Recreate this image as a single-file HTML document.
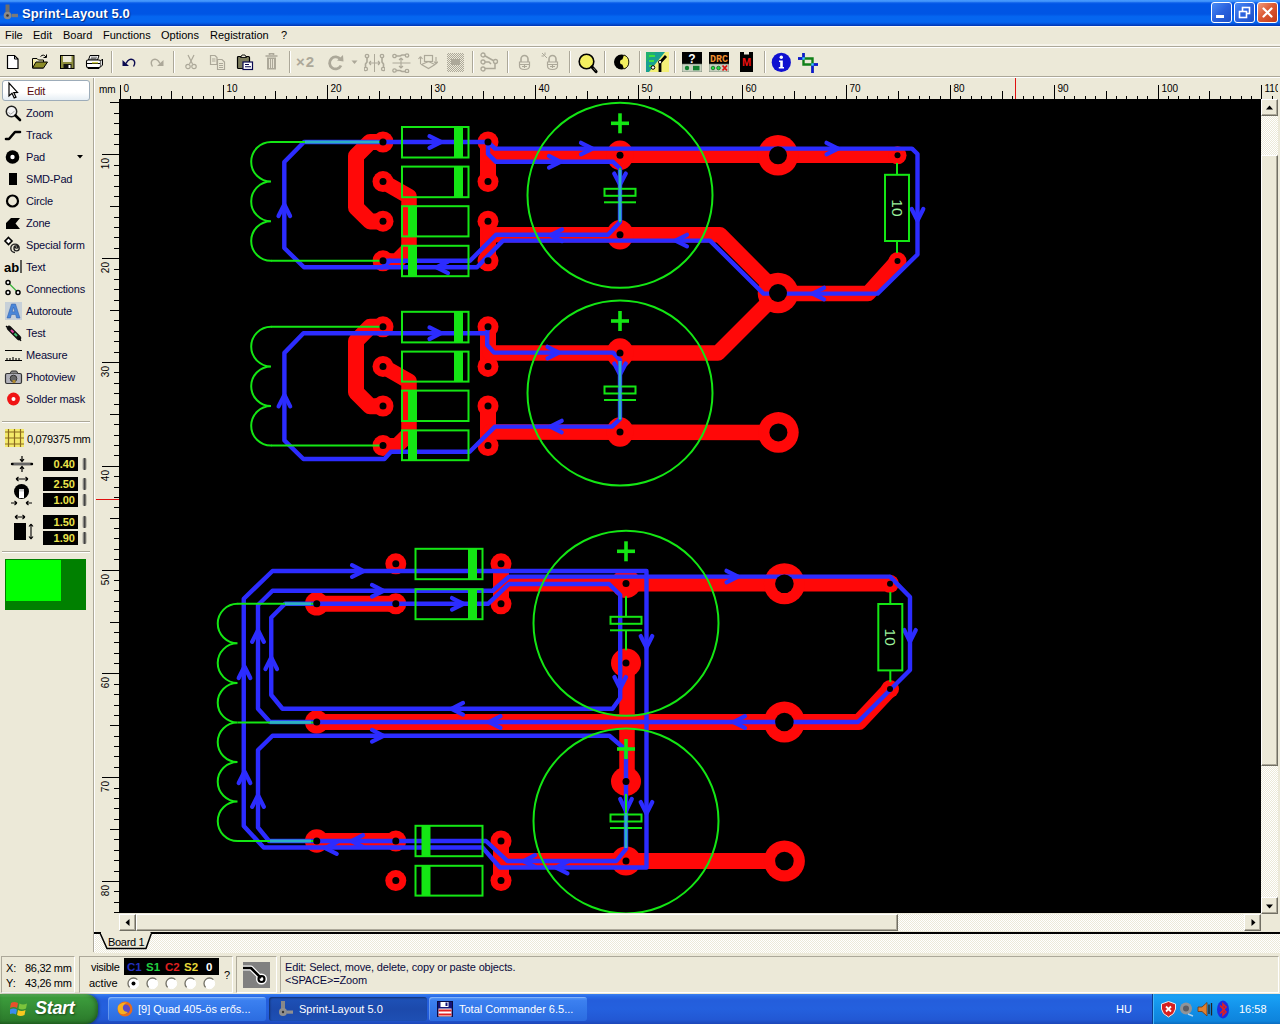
<!DOCTYPE html><html><head><meta charset="utf-8"><title>Sprint-Layout 5.0</title><style>
*{box-sizing:border-box;margin:0;padding:0}
html,body{width:1280px;height:1024px;overflow:hidden;background:#ece9d8;font-family:"Liberation Sans",sans-serif;font-size:11px;color:#000}
.abs{position:absolute}
#title{position:absolute;left:0;top:0;width:1280px;height:26px;background:linear-gradient(to bottom,#4a9cff 0%,#3a8cf8 6%,#0c5eea 11%,#0055e6 16%,#0055e4 54%,#0566f0 64%,#0566f0 85%,#0456de 91%,#0034b0 100%)}
#title .t{position:absolute;left:22px;top:6px;color:#fff;font-weight:bold;font-size:13px;text-shadow:1px 1px 1px #0a2a80;letter-spacing:0.1px;white-space:nowrap}
#menu{position:absolute;left:0;top:26px;width:1280px;height:20px;background:#ece9d8}
#menu span{position:absolute;top:3px;white-space:nowrap}
.t11{font-size:11px;white-space:nowrap;position:absolute}
svg{display:block}
</style></head><body>
<div id="title"><svg class="abs" style="left:3px;top:4px" width="18" height="18" viewBox="0 0 18 18" ><rect x="2.500" y="0.500" width="4" height="8" fill="#6e6e6e"/><circle cx="4.500" cy="11.500" r="3.800" fill="#8a8a8a"/><circle cx="4.500" cy="11.500" r="1.300" fill="#333"/><rect x="8.500" y="9.800" width="6.500" height="3.400" fill="#7a7a7a"/></svg><div class="t">Sprint-Layout 5.0</div><div class="abs" style="left:1211px;top:2px;width:21px;height:21px;border:1px solid #fff;border-radius:3px;background:linear-gradient(135deg,#4a8cf6 0%,#2a62de 50%,#1c4fc8 100%)"><div class="abs" style="left:4px;top:12px;width:8px;height:3px;background:#fff"></div></div><div class="abs" style="left:1234px;top:2px;width:21px;height:21px;border:1px solid #fff;border-radius:3px;background:linear-gradient(135deg,#4a8cf6 0%,#2a62de 50%,#1c4fc8 100%)"><svg class="abs" style="left:3px;top:3px" width="14" height="14" viewBox="0 0 14 14" ><rect x="4.5" y="1.5" width="7" height="6" fill="none" stroke="#fff" stroke-width="1.6"/><rect x="1.5" y="5.5" width="7" height="6" fill="#2a62de" stroke="#fff" stroke-width="1.6"/></svg></div><div class="abs" style="left:1257px;top:2px;width:21px;height:21px;border:1px solid #fff;border-radius:3px;background:linear-gradient(135deg,#f09a7c 0%,#dc5a34 45%,#c23a18 100%)"><svg class="abs" style="left:3px;top:3px" width="14" height="14" viewBox="0 0 14 14" ><path d="M2.5 2.5 L10.5 10.5 M10.5 2.5 L2.5 10.5" stroke="#fff" stroke-width="2.2" stroke-linecap="round"/></svg></div></div>
<div id="menu"><span style="left:5px">File</span><span style="left:33px">Edit</span><span style="left:63px">Board</span><span style="left:103px">Functions</span><span style="left:161px">Options</span><span style="left:210px">Registration</span><span style="left:281px">?</span></div><div class="abs" style="left:0px;top:26px;width:1280px;height:1px;background:#fbfaf6"></div><div class="abs" style="left:0px;top:44px;width:1280px;height:2px;background:#f5f3ea"></div><div class="abs" style="left:0px;top:46px;width:1280px;height:1px;background:#aca899"></div><div class="abs" style="left:0px;top:47px;width:1280px;height:1px;background:#fff"></div>
<div class="abs" style="left:0px;top:76px;width:1280px;height:1px;background:#aca899"></div><div class="abs" style="left:0px;top:77px;width:1280px;height:1px;background:#fff"></div><div class="abs" style="left:111px;top:51px;width:1px;height:22px;background:#aca899"></div><div class="abs" style="left:112px;top:51px;width:1px;height:22px;background:#fff"></div><div class="abs" style="left:173px;top:51px;width:1px;height:22px;background:#aca899"></div><div class="abs" style="left:174px;top:51px;width:1px;height:22px;background:#fff"></div><div class="abs" style="left:289px;top:51px;width:1px;height:22px;background:#aca899"></div><div class="abs" style="left:290px;top:51px;width:1px;height:22px;background:#fff"></div><div class="abs" style="left:472px;top:51px;width:1px;height:22px;background:#aca899"></div><div class="abs" style="left:473px;top:51px;width:1px;height:22px;background:#fff"></div><div class="abs" style="left:507px;top:51px;width:1px;height:22px;background:#aca899"></div><div class="abs" style="left:508px;top:51px;width:1px;height:22px;background:#fff"></div><div class="abs" style="left:569px;top:51px;width:1px;height:22px;background:#aca899"></div><div class="abs" style="left:570px;top:51px;width:1px;height:22px;background:#fff"></div><div class="abs" style="left:604px;top:51px;width:1px;height:22px;background:#aca899"></div><div class="abs" style="left:605px;top:51px;width:1px;height:22px;background:#fff"></div><div class="abs" style="left:639px;top:51px;width:1px;height:22px;background:#aca899"></div><div class="abs" style="left:640px;top:51px;width:1px;height:22px;background:#fff"></div><div class="abs" style="left:674px;top:51px;width:1px;height:22px;background:#aca899"></div><div class="abs" style="left:675px;top:51px;width:1px;height:22px;background:#fff"></div><div class="abs" style="left:764px;top:51px;width:1px;height:22px;background:#aca899"></div><div class="abs" style="left:765px;top:51px;width:1px;height:22px;background:#fff"></div><svg class="abs" style="left:6px;top:54px" width="14" height="16" viewBox="0 0 14 16" ><path d="M1.5 1.5H8.5L12 5V14.5H1.5Z" fill="#fff" stroke="#000" stroke-width="1.2"/><path d="M8.5 1.5V5H12" fill="none" stroke="#000" stroke-width="1"/></svg><svg class="abs" style="left:31px;top:53px" width="18" height="17" viewBox="0 0 18 17" ><path d="M1.5 5.5H6L7.5 7H12.5V9" fill="#f4ec9c" stroke="#000" stroke-width="1"/><path d="M1.5 5.5V15H12.5" fill="#f4ec9c" stroke="#000" stroke-width="1"/><path d="M1.5 15L5 9H16.5L12.5 15Z" fill="#8c8c28" stroke="#000" stroke-width="1"/><path d="M9.5 3.5Q12.5 0.5 15 4M15.5 1.5V4.5H12.5" fill="none" stroke="#000" stroke-width="1"/></svg><svg class="abs" style="left:60px;top:54px" width="15" height="16" viewBox="0 0 15 16" ><rect x="0.5" y="1.5" width="13.5" height="13" fill="#8c8c3c" stroke="#000" stroke-width="1"/><rect x="3" y="2" width="8.5" height="6" fill="#ece9d8"/><rect x="3.5" y="10" width="8" height="4.5" fill="#111"/><rect x="8.5" y="11" width="2" height="3" fill="#fff"/></svg><svg class="abs" style="left:85px;top:54px" width="19" height="16" viewBox="0 0 19 16" ><path d="M5 1.5H14L12.5 6H3.5Z" fill="#fff" stroke="#000" stroke-width="1"/><path d="M6 3.2H12M5.5 4.6H11.5" stroke="#444" stroke-width="0.8"/><rect x="1.5" y="6" width="14" height="7.5" rx="1.5" fill="#fff" stroke="#000" stroke-width="1.1"/><path d="M15.5 7L17.5 5V11L15.5 13" fill="#ddd" stroke="#000" stroke-width="1"/><path d="M2 9.5H15" stroke="#000" stroke-width="1"/><path d="M7 8.8H13" stroke="#c8c828" stroke-width="1.2"/><path d="M3 13.5V14.5H14V13.5" fill="none" stroke="#000"/></svg><svg class="abs" style="left:121px;top:56px" width="16" height="12" viewBox="0 0 16 12" ><path d="M5 7.5Q8 1.5 12.5 4Q15 6.5 12.5 10.5" fill="none" stroke="#0a0a50" stroke-width="1.4"/><path d="M1.5 4V10H8Z" fill="#0a0a50"/></svg><svg class="abs" style="left:149px;top:56px" width="16" height="12" viewBox="0 0 16 12" ><path d="M11 7.5Q8 1.5 3.5 4Q1 6.5 3.5 10.5" fill="none" stroke="#aca899" stroke-width="1.4"/><path d="M14.5 4V10H8Z" fill="#aca899"/></svg><svg class="abs" style="left:184px;top:54px" width="14" height="17" viewBox="0 0 14 17" ><path d="M4 1L8.5 10M10 1L5.5 10" stroke="#aca899" stroke-width="1.2" fill="none"/><circle cx="4" cy="12.5" r="2.2" fill="none" stroke="#aca899" stroke-width="1.2"/><circle cx="10" cy="12.5" r="2.2" fill="none" stroke="#aca899" stroke-width="1.2"/></svg><svg class="abs" style="left:209px;top:54px" width="18" height="17" viewBox="0 0 18 17" ><path d="M1.5 1.5H6L8 3.5V10.5H1.5Z" fill="#ece9d8" stroke="#aca899" stroke-width="1.2"/><path d="M3 5H6.5M3 7H6.5" stroke="#aca899"/><path d="M8.5 5.5H13L15.5 8V15.500H8.5Z" fill="#ece9d8" stroke="#aca899" stroke-width="1.2"/><path d="M10 9.5H14M10 11.5H14M10 13.5H14" stroke="#aca899"/></svg><svg class="abs" style="left:236px;top:54px" width="18" height="17" viewBox="0 0 18 17" ><rect x="1.5" y="2.5" width="12" height="12" rx="1" fill="#7c7c5c" stroke="#000" stroke-width="1.2"/><path d="M4.5 3.5L6 1H9L10.500 3.5Z" fill="#ece9d8" stroke="#000" stroke-width="0.9"/><rect x="7" y="8" width="9.5" height="7.5" fill="#fff" stroke="#0a0a50" stroke-width="1.2"/><path d="M9 10.5H13M9 12.800H15" stroke="#0a0a50" stroke-width="1.1"/></svg><svg class="abs" style="left:264px;top:53px" width="15" height="18" viewBox="0 0 15 18" ><path d="M5.5 2V0.800H9.5V2M1.5 3H13.5" stroke="#aca899" stroke-width="1.6" fill="none"/><path d="M3 4.500H12V16.500H3Z" fill="#aca899"/><path d="M5.500 6V15M7.500 6V15M9.500 6V15" stroke="#ece9d8" stroke-width="0.9"/></svg><div class="abs" style="left:296px;top:53px;font-size:15px;font-weight:bold;color:#aca899;letter-spacing:1px;line-height:18px">×2</div><svg class="abs" style="left:326px;top:54px" width="19" height="18" viewBox="0 0 19 18" ><path d="M14.500 5.500A6 6 0 1 0 15 11.500" fill="none" stroke="#aca899" stroke-width="2.800"/><path d="M11 6.500L17.500 7.500L17 1Z" fill="#aca899"/></svg><svg class="abs" style="left:351px;top:60px" width="7" height="5" viewBox="0 0 7 5" ><path d="M0.500 0.500H6.500L3.500 4Z" fill="#aca899"/></svg><svg class="abs" style="left:364px;top:53px" width="21" height="20" viewBox="0 0 21 20" ><path d="M10.500 1V19" stroke="#aca899" stroke-width="1"/><path d="M3 4V9L1.500 11V15M18 4V9L19.500 11V15" stroke="#aca899" stroke-width="1.600" fill="none"/><circle cx="3" cy="3" r="1.700" fill="#ece9d8" stroke="#aca899" stroke-width="1.300"/><circle cx="18" cy="3" r="1.700" fill="#ece9d8" stroke="#aca899" stroke-width="1.300"/><circle cx="1.800" cy="16" r="1.700" fill="#ece9d8" stroke="#aca899" stroke-width="1.300"/><circle cx="19.200" cy="16" r="1.700" fill="#ece9d8" stroke="#aca899" stroke-width="1.300"/><path d="M5 10H16M5 10l2-2M5 10l2 2M16 10l-2-2M16 10l-2 2" stroke="#aca899" stroke-width="1.100" fill="none"/></svg><svg class="abs" style="left:392px;top:53px" width="19" height="20" viewBox="0 0 19 20" ><path d="M0.500 10H18.500" stroke="#aca899" stroke-width="1"/><path d="M3 3H8L10 2H14M3 17.500H8L10 18.500H14" stroke="#aca899" stroke-width="1.600" fill="none"/><circle cx="2.500" cy="3" r="1.700" fill="#ece9d8" stroke="#aca899" stroke-width="1.300"/><circle cx="15" cy="2.500" r="1.700" fill="#ece9d8" stroke="#aca899" stroke-width="1.300"/><circle cx="2.500" cy="17.500" r="1.700" fill="#ece9d8" stroke="#aca899" stroke-width="1.300"/><circle cx="15" cy="18" r="1.700" fill="#ece9d8" stroke="#aca899" stroke-width="1.300"/><path d="M9 5V15M9 5l-2 2M9 5l2 2M9 15l-2-2M9 15l2-2" stroke="#aca899" stroke-width="1.100" fill="none"/></svg><svg class="abs" style="left:418px;top:54px" width="20" height="18" viewBox="0 0 20 18" ><rect x="6.500" y="1.500" width="8" height="6" fill="none" stroke="#aca899" stroke-width="1.200"/><path d="M3.500 10.500L10.500 7.500L17 10.500L10.500 14.500Z" fill="none" stroke="#aca899" stroke-width="1.100"/><path d="M2.500 10V2.500M2.500 2.500l-2 2.500M2.500 2.500l2 2.500M18 3V10M18 10l-2-2.500M18 10l2-2.500" stroke="#aca899" stroke-width="1.100" fill="none"/></svg><div class="abs" style="left:447px;top:53px;width:17px;height:19px;background-color:#ece9d8;background-image:linear-gradient(45deg,#aca899 25%,transparent 25%,transparent 75%,#aca899 75%),linear-gradient(45deg,#aca899 25%,transparent 25%,transparent 75%,#aca899 75%);background-size:2px 2px;background-position:0 0,1px 1px"></div><div class="abs" style="left:451px;top:59px;width:9px;height:6px;background:#aca899"></div><svg class="abs" style="left:480px;top:52px" width="20" height="21" viewBox="0 0 20 21" ><path d="M3.500 3L15 9.500V16.500H3.500M3.500 10H9L11 12" fill="none" stroke="#aca899" stroke-width="1.500"/><circle cx="3" cy="3" r="2" fill="#ece9d8" stroke="#aca899" stroke-width="1.300"/><circle cx="3" cy="10" r="2" fill="#ece9d8" stroke="#aca899" stroke-width="1.300"/><circle cx="3" cy="17" r="2" fill="#ece9d8" stroke="#aca899" stroke-width="1.300"/><circle cx="15.500" cy="9.500" r="2" fill="#ece9d8" stroke="#aca899" stroke-width="1.300"/></svg><svg class="abs" style="left:517px;top:54px" width="15" height="17" viewBox="0 0 15 17" ><path d="M4 8V5A3.500 3.500 0 0 1 11 5V8" fill="none" stroke="#aca899" stroke-width="1.600"/><path d="M2.500 8H12.500V12Q12.500 15.500 7.500 15.500Q2.500 15.500 2.500 12Z" fill="#ece9d8" stroke="#aca899" stroke-width="1.200"/><path d="M2.500 10.500H12.500M5 12.500H10M7.500 10.500V14" stroke="#aca899" stroke-width="1.100"/></svg><svg class="abs" style="left:545px;top:54px" width="15" height="17" viewBox="0 0 15 17" ><path d="M4 8V5A3.500 3.500 0 0 1 11 5V8" fill="none" stroke="#aca899" stroke-width="1.600"/><path d="M2.500 8H12.500V12Q12.500 15.500 7.500 15.500Q2.500 15.500 2.500 12Z" fill="#ece9d8" stroke="#aca899" stroke-width="1.200"/><path d="M2.500 10.500H12.500M5 12.500H10M7.500 10.500V14" stroke="#aca899" stroke-width="1.100"/></svg><svg class="abs" style="left:541px;top:52px" width="8" height="8" viewBox="0 0 8 8" ><path d="M1 1L6 6M4 0.500V3M0.500 4H3" stroke="#aca899" stroke-width="1"/></svg><svg class="abs" style="left:577px;top:52px" width="22" height="22" viewBox="0 0 22 22" ><circle cx="9.500" cy="9.500" r="7.300" fill="#f4f060" stroke="#000" stroke-width="1.600"/><path d="M15 15L19 19.500" stroke="#000" stroke-width="3.200" stroke-linecap="round"/><path d="M16.500 16.200L18.500 18.500" stroke="#999" stroke-width="0.800"/></svg><svg class="abs" style="left:613px;top:53px" width="18" height="18" viewBox="0 0 18 18" ><circle cx="8.500" cy="9" r="7.500" fill="#000"/><path d="M8.500 9L11 1.900A7.500 7.500 0 0 1 11 16.100Z" fill="#f4f060"/><circle cx="9.500" cy="9" r="2.500" fill="#f4f060"/><path d="M11 2A7.500 7.500 0 0 1 11 16" fill="none" stroke="#000" stroke-width="0.900"/></svg><svg class="abs" style="left:646px;top:52px" width="23" height="20" viewBox="0 0 23 20" ><rect width="23" height="20" fill="#f4f078"/><path d="M0 0H19L3 20H0Z" fill="#18a090"/><path d="M0 0H10L0 10Z" fill="#20b070"/><path d="M3 4H9M3 9H8M3 14H6" stroke="#40e040" stroke-width="2.200"/><circle cx="7" cy="15.500" r="1.800" fill="#fff" stroke="#000"/><path d="M14 20V10.500L20 4" stroke="#000" stroke-width="2.800" fill="none"/><circle cx="14" cy="10" r="1.600" fill="#fff" stroke="#000" stroke-width="0.800"/></svg><svg class="abs" style="left:682px;top:52px" width="20" height="20" viewBox="0 0 20 20" ><rect width="20" height="12" fill="#000"/><rect y="12" width="20" height="8" fill="#c8d0c0" stroke="#607060" stroke-width="0.600"/><text x="10" y="10.500" text-anchor="middle" font-family="'Liberation Sans',sans-serif" font-weight="bold" font-size="12" fill="#fff">?</text><circle cx="5" cy="16" r="2.200" fill="#108030"/><rect x="11" y="13.800" width="6.500" height="4.500" fill="#108030"/></svg><svg class="abs" style="left:709px;top:52px" width="20" height="20" viewBox="0 0 20 20" ><rect width="20" height="12" fill="#000"/><rect y="12" width="20" height="8" fill="#c8d0c0" stroke="#607060" stroke-width="0.600"/><text x="10" y="9.500" text-anchor="middle" font-family="'Liberation Mono',monospace" font-weight="bold" font-size="10" fill="#f09030" textLength="18" lengthAdjust="spacingAndGlyphs">DRC</text><circle cx="4" cy="16" r="1.800" fill="#20e040" stroke="#106020" stroke-width="0.800"/><circle cx="9.500" cy="16" r="1.800" fill="#20e040" stroke="#106020" stroke-width="0.800"/><path d="M13.500 13.500L18 18.500M18 13.500L13.500 18.500" stroke="#e01010" stroke-width="1.800"/></svg><svg class="abs" style="left:740px;top:52px" width="13" height="20" viewBox="0 0 13 20" ><path d="M0 0H4V2.500H9V0H13V20H0Z" fill="#000"/><text x="6.500" y="14" text-anchor="middle" font-family="'Liberation Sans',sans-serif" font-weight="bold" font-size="11" fill="#f01010">M</text></svg><svg class="abs" style="left:771px;top:52px" width="21" height="21" viewBox="0 0 21 21" ><circle cx="10.300" cy="10.400" r="9.600" fill="#1010d0"/><circle cx="10.300" cy="5.300" r="1.700" fill="#fff"/><path d="M8 8.500H11.800V15H13V16.500H7.800V15H9.200V10H8Z" fill="#fff"/></svg><svg class="abs" style="left:797px;top:52px" width="22" height="22" viewBox="0 0 22 22" ><path d="M6.500 1V12.500H21M1 6.500H15.500V21" fill="none" stroke="#108018" stroke-width="2.400"/><path d="M1 6.500H6.500M6.500 1V6.500M15.500 12.500V21M15.500 12.500H21" stroke="#1010e0" stroke-width="2.400" fill="none"/><rect x="5.300" y="5.300" width="2.400" height="2.400" fill="#40d0f0"/><rect x="14.300" y="11.300" width="2.400" height="2.400" fill="#40d0f0"/></svg>
<div class="abs" style="left:93px;top:78px;width:1px;height:874px;background:#aca899"></div><div class="abs" style="left:94px;top:78px;width:1px;height:874px;background:#fff"></div><div class="abs" style="left:2px;top:80px;width:88px;height:21px;background:linear-gradient(to bottom,#fff 0%,#fff 60%,#e6eef4 100%);border:1px solid #9dacb9;border-radius:3px"></div><div class="t11" style="left:27px;top:85px;color:#5a0a0a;letter-spacing:-0.2px">Edit</div><svg class="abs" style="left:3px;top:81px" width="20" height="20" viewBox="0 0 20 20" ><path d="M6 2 L6 15 L9 12.3 L11.2 17 L13 16.2 L10.8 11.6 L14.5 11.4 Z" fill="#fff" stroke="#000" stroke-width="1.2" stroke-linejoin="miter"/></svg><div class="t11" style="left:26px;top:107px;color:#0a0a3c;letter-spacing:-0.2px">Zoom</div><svg class="abs" style="left:3px;top:103px" width="20" height="20" viewBox="0 0 20 20" ><circle cx="8.5" cy="8.5" r="5.2" fill="#f4f4f4" stroke="#222" stroke-width="1.5"/><path d="M5.5 9.5l2 1.6 2.2-1.2 1.8-2" stroke="#aaa" fill="none"/><path d="M12.5 12.5L17 17" stroke="#000" stroke-width="2.6" stroke-linecap="round"/></svg><div class="t11" style="left:26px;top:129px;color:#0a0a3c;letter-spacing:-0.2px">Track</div><svg class="abs" style="left:3px;top:125px" width="20" height="20" viewBox="0 0 20 20" ><path d="M3 14H6L12 7H17" stroke="#000" stroke-width="2.6" fill="none" stroke-linecap="round" stroke-linejoin="round"/></svg><div class="t11" style="left:26px;top:151px;color:#0a0a3c;letter-spacing:-0.2px">Pad</div><svg class="abs" style="left:3px;top:147px" width="20" height="20" viewBox="0 0 20 20" ><circle cx="9.5" cy="10" r="6.8" fill="#000"/><circle cx="9.5" cy="10" r="2.2" fill="#fff"/></svg><div class="t11" style="left:26px;top:173px;color:#0a0a3c;letter-spacing:-0.2px">SMD-Pad</div><svg class="abs" style="left:3px;top:169px" width="20" height="20" viewBox="0 0 20 20" ><rect x="6" y="4" width="8" height="12" fill="#000"/></svg><div class="t11" style="left:26px;top:195px;color:#0a0a3c;letter-spacing:-0.2px">Circle</div><svg class="abs" style="left:3px;top:191px" width="20" height="20" viewBox="0 0 20 20" ><circle cx="9.5" cy="10" r="5.5" fill="none" stroke="#000" stroke-width="2.2"/></svg><div class="t11" style="left:26px;top:217px;color:#0a0a3c;letter-spacing:-0.2px">Zone</div><svg class="abs" style="left:3px;top:213px" width="20" height="20" viewBox="0 0 20 20" ><path d="M3 16V10L8 5H17L12.5 10.5L17 16Z" fill="#000"/></svg><div class="t11" style="left:26px;top:239px;color:#0a0a3c;letter-spacing:-0.2px">Special form</div><svg class="abs" style="left:3px;top:235px" width="20" height="20" viewBox="0 0 20 20" ><path d="M5.5 2.5L9 6L5.5 9.5L2 6Z" fill="#fff" stroke="#000" stroke-width="1.6"/><path d="M12 17.5a4.2 4.2 0 1 1 4.2-4.2a2.6 2.6 0 1 1-2.6-2.6a1.2 1.2 0 1 1-1.2 1.2" fill="none" stroke="#222" stroke-width="1.4"/></svg><div class="t11" style="left:26px;top:261px;color:#0a0a3c;letter-spacing:-0.2px">Text</div><svg class="abs" style="left:3px;top:257px" width="20" height="20" viewBox="0 0 20 20" ><text x="1" y="15" font-family="'Liberation Sans',sans-serif" font-weight="bold" font-size="13" fill="#000">ab</text><path d="M18 3V16" stroke="#000" stroke-width="1.2"/></svg><div class="t11" style="left:26px;top:283px;color:#0a0a3c;letter-spacing:-0.2px">Connections</div><svg class="abs" style="left:3px;top:279px" width="20" height="20" viewBox="0 0 20 20" ><path d="M5 3.5L15 13.5" stroke="#3cb43c" stroke-width="1.2"/><circle cx="5" cy="3.5" r="2" fill="#fff" stroke="#000" stroke-width="1.5"/><circle cx="5" cy="13.5" r="2" fill="#fff" stroke="#000" stroke-width="1.5"/><circle cx="15" cy="13.5" r="2" fill="#fff" stroke="#000" stroke-width="1.5"/></svg><div class="t11" style="left:26px;top:305px;color:#0a0a3c;letter-spacing:-0.2px">Autoroute</div><svg class="abs" style="left:3px;top:301px" width="20" height="20" viewBox="0 0 20 20" ><rect x="2" y="1" width="17" height="18" fill="#b8c4d8" opacity="0.7"/><path d="M4 17L8.5 3H12.5L17 17H13.6L12.6 13.5H8.4L7.4 17Z M9.2 10.8H11.8L10.5 6Z" fill="#4a86d8" fill-rule="evenodd" stroke="#2a5aa8" stroke-width="0.5"/></svg><div class="t11" style="left:26px;top:327px;color:#0a0a3c;letter-spacing:-0.2px">Test</div><svg class="abs" style="left:3px;top:323px" width="20" height="20" viewBox="0 0 20 20" ><path d="M3 3L6 6" stroke="#000" stroke-width="1.2"/><path d="M6 5L16 15" stroke="#111" stroke-width="4.6" stroke-linecap="round"/><path d="M8 7L10.5 9.5" stroke="#e040a0" stroke-width="2"/><path d="M11.5 10.5L14 13" stroke="#40c070" stroke-width="2"/><path d="M16 15L18 18" stroke="#000" stroke-width="1.2"/></svg><div class="t11" style="left:26px;top:349px;color:#0a0a3c;letter-spacing:-0.2px">Measure</div><svg class="abs" style="left:3px;top:345px" width="20" height="20" viewBox="0 0 20 20" ><path d="M2 5.5H19M2 15.5H19M4 15.5v-2.5M7 15.5v-2.5M10 15.5v-3.5M13 15.5v-2.5M16 15.5v-2.5" stroke="#000" stroke-width="1.1" fill="none"/></svg><div class="t11" style="left:26px;top:371px;color:#0a0a3c;letter-spacing:-0.2px">Photoview</div><svg class="abs" style="left:3px;top:367px" width="20" height="20" viewBox="0 0 20 20" ><rect x="2.5" y="6.5" width="16" height="10" rx="1.5" fill="#b0b0b8" stroke="#333" stroke-width="1.2"/><path d="M7 6.5L8.5 4H13.5L15 6.5" fill="#888" stroke="#333"/><circle cx="10.5" cy="11.5" r="3.3" fill="#666" stroke="#333"/><rect x="9.5" y="13" width="3" height="3" fill="#b08a30"/></svg><div class="t11" style="left:26px;top:393px;color:#0a0a3c;letter-spacing:-0.2px">Solder mask</div><svg class="abs" style="left:3px;top:389px" width="20" height="20" viewBox="0 0 20 20" ><circle cx="10.5" cy="10" r="6.4" fill="#f01414"/><circle cx="10.5" cy="10" r="2" fill="#fff"/></svg><svg class="abs" style="left:76px;top:154px" width="8" height="6" viewBox="0 0 8 6" ><path d="M1 1 L7 1 L4 4.5 Z" fill="#000"/></svg><div class="abs" style="left:2px;top:421px;width:88px;height:1px;background:#aca899"></div><div class="abs" style="left:2px;top:422px;width:88px;height:1px;background:#fff"></div><div class="abs" style="left:2px;top:551px;width:88px;height:1px;background:#aca899"></div><div class="abs" style="left:2px;top:552px;width:88px;height:1px;background:#fff"></div><svg class="abs" style="left:5px;top:429px" width="19" height="18" viewBox="0 0 19 18" ><rect x="0" y="0" width="19" height="18" fill="#f4ea6a"/><path d="M3.5 0V18M0 3.0H19" stroke="#8a6a20" stroke-width="1.2"/><path d="M9.5 0V18M0 9.0H19" stroke="#8a6a20" stroke-width="1.2"/><path d="M15.5 0V18M0 15.0H19" stroke="#8a6a20" stroke-width="1.2"/></svg><div class="t11" style="left:27px;top:433px;letter-spacing:-0.35px">0,079375 mm</div><div class="abs" style="left:43px;top:457px;width:35px;height:14px;background:#000;color:#ece44c;font-weight:bold;font-size:11px;text-align:right;padding-right:3px;line-height:14px">0.40</div><div class="abs" style="left:82px;top:458px;width:5px;height:12px;background:linear-gradient(to right,#ece9d8,#555 45%,#333 55%,#ece9d8);border-radius:2px"></div><div class="abs" style="left:43px;top:477px;width:35px;height:14px;background:#000;color:#ece44c;font-weight:bold;font-size:11px;text-align:right;padding-right:3px;line-height:14px">2.50</div><div class="abs" style="left:82px;top:478px;width:5px;height:12px;background:linear-gradient(to right,#ece9d8,#555 45%,#333 55%,#ece9d8);border-radius:2px"></div><div class="abs" style="left:43px;top:493px;width:35px;height:14px;background:#000;color:#ece44c;font-weight:bold;font-size:11px;text-align:right;padding-right:3px;line-height:14px">1.00</div><div class="abs" style="left:82px;top:494px;width:5px;height:12px;background:linear-gradient(to right,#ece9d8,#555 45%,#333 55%,#ece9d8);border-radius:2px"></div><div class="abs" style="left:43px;top:515px;width:35px;height:14px;background:#000;color:#ece44c;font-weight:bold;font-size:11px;text-align:right;padding-right:3px;line-height:14px">1.50</div><div class="abs" style="left:82px;top:516px;width:5px;height:12px;background:linear-gradient(to right,#ece9d8,#555 45%,#333 55%,#ece9d8);border-radius:2px"></div><div class="abs" style="left:43px;top:531px;width:35px;height:14px;background:#000;color:#ece44c;font-weight:bold;font-size:11px;text-align:right;padding-right:3px;line-height:14px">1.90</div><div class="abs" style="left:82px;top:532px;width:5px;height:12px;background:linear-gradient(to right,#ece9d8,#555 45%,#333 55%,#ece9d8);border-radius:2px"></div><svg class="abs" style="left:10px;top:455px" width="24" height="18" viewBox="0 0 24 18" ><path d="M2 9H22" stroke="#000" stroke-width="2.4" stroke-linecap="round"/><path d="M3.5 9H20.5" stroke="#fff" stroke-width="0.8"/><path d="M12 1V6M10 4.2L12 6.5L14 4.2M12 17V12M10 13.8L12 11.5L14 13.8" stroke="#000" stroke-width="1.2" fill="none"/></svg><svg class="abs" style="left:9px;top:476px" width="26" height="32" viewBox="0 0 26 32" ><path d="M7 3H19M7 3l2.5-2M7 3l2.5 2M19 3l-2.5-2M19 3l-2.5 2" stroke="#000" stroke-width="1.1" fill="none"/><circle cx="12.5" cy="15.5" r="7.5" fill="#000"/><rect x="10" y="13" width="5" height="9" fill="#fff"/><rect x="10" y="13" width="5" height="2.5" fill="#ccc"/><path d="M2 27H8M8 27l-2.5-2M8 27l-2.5 2M23 27H17M17 27l2.5-2M17 27l2.5 2" stroke="#000" stroke-width="1.1" fill="none"/></svg><svg class="abs" style="left:12px;top:513px" width="24" height="30" viewBox="0 0 24 30" ><path d="M3 4H13M3 4l2.5-2M3 4l2.5 2M13 4l-2.5-2M13 4l-2.5 2" stroke="#000" stroke-width="1.1" fill="none"/><rect x="2" y="10" width="12" height="17" fill="#000"/><path d="M19 11V26M19 11l-2 2.5M19 11l2 2.5M19 26l-2-2.5M19 26l2-2.5" stroke="#000" stroke-width="1.1" fill="none"/></svg><div class="abs" style="left:5px;top:559px;width:81px;height:51px;background:#008000"></div><div class="abs" style="left:6px;top:560px;width:55px;height:41px;background:#00ff00"></div>
<svg class="abs" style="left:0px;top:0px" width="1280" height="1024" viewBox="0 0 1280 1024" style="position:absolute;left:0;top:0;pointer-events:none"><path d="M120.5 85V99M130.5 95.5V99M140.5 95.5V99M151.5 95.5V99M161.5 95.5V99M171.5 91V99M182.5 95.5V99M192.5 95.5V99M203.5 95.5V99M213.5 95.5V99M223.5 85V99M234.5 95.5V99M244.5 95.5V99M254.5 95.5V99M265.5 95.5V99M275.5 91V99M286.5 95.5V99M296.5 95.5V99M306.5 95.5V99M317.5 95.5V99M327.5 85V99M337.5 95.5V99M348.5 95.5V99M358.5 95.5V99M369.5 95.5V99M379.5 91V99M389.5 95.5V99M400.5 95.5V99M410.5 95.5V99M421.5 95.5V99M431.5 85V99M441.5 95.5V99M452.5 95.5V99M462.5 95.5V99M472.5 95.5V99M483.5 91V99M493.5 95.5V99M504.5 95.5V99M514.5 95.5V99M524.5 95.5V99M535.5 85V99M545.5 95.5V99M555.5 95.5V99M566.5 95.5V99M576.5 95.5V99M587.5 91V99M597.5 95.5V99M607.5 95.5V99M618.5 95.5V99M628.5 95.5V99M638.5 85V99M649.5 95.5V99M659.5 95.5V99M670.5 95.5V99M680.5 95.5V99M690.5 91V99M701.5 95.5V99M711.5 95.5V99M722.5 95.5V99M732.5 95.5V99M742.5 85V99M753.5 95.5V99M763.5 95.5V99M773.5 95.5V99M784.5 95.5V99M794.5 91V99M805.5 95.5V99M815.5 95.5V99M825.5 95.5V99M836.5 95.5V99M846.5 85V99M856.5 95.5V99M867.5 95.5V99M877.5 95.5V99M888.5 95.5V99M898.5 91V99M908.5 95.5V99M919.5 95.5V99M929.5 95.5V99M940.5 95.5V99M950.5 85V99M960.5 95.5V99M971.5 95.5V99M981.5 95.5V99M991.5 95.5V99M1002.5 91V99M1012.5 95.5V99M1023.5 95.5V99M1033.5 95.5V99M1043.5 95.5V99M1054.5 85V99M1064.5 95.5V99M1074.5 95.5V99M1085.5 95.5V99M1095.5 95.5V99M1106.5 91V99M1116.5 95.5V99M1126.5 95.5V99M1137.5 95.5V99M1147.5 95.5V99M1158.5 85V99M1168.5 95.5V99M1178.5 95.5V99M1189.5 95.5V99M1199.5 95.5V99M1209.5 91V99M1220.5 95.5V99M1230.5 95.5V99M1241.5 95.5V99M1251.5 95.5V99M1261.5 85V99M1272.5 95.5V99M110 102.5H119M114 113.5H119M114 123.5H119M114 134.5H119M114 144.5H119M102 154.5H119M114 165.5H119M114 175.5H119M114 186.5H119M114 196.5H119M110 206.5H119M114 217.5H119M114 227.5H119M114 237.5H119M114 248.5H119M102 258.5H119M114 269.5H119M114 279.5H119M114 289.5H119M114 300.5H119M110 310.5H119M114 320.5H119M114 331.5H119M114 341.5H119M114 352.5H119M102 362.5H119M114 372.5H119M114 383.5H119M114 393.5H119M114 404.5H119M110 414.5H119M114 424.5H119M114 435.5H119M114 445.5H119M114 455.5H119M102 466.5H119M114 476.5H119M114 487.5H119M114 497.5H119M114 507.5H119M110 518.5H119M114 528.5H119M114 538.5H119M114 549.5H119M114 559.5H119M102 570.5H119M114 580.5H119M114 590.5H119M114 601.5H119M114 611.5H119M110 622.5H119M114 632.5H119M114 642.5H119M114 653.5H119M114 663.5H119M102 673.5H119M114 684.5H119M114 694.5H119M114 705.5H119M114 715.5H119M110 725.5H119M114 736.5H119M114 746.5H119M114 756.5H119M114 767.5H119M102 777.5H119M114 788.5H119M114 798.5H119M114 808.5H119M114 819.5H119M110 829.5H119M114 839.5H119M114 850.5H119M114 860.5H119M114 871.5H119M102 881.5H119M114 891.5H119M114 902.5H119M114 912.5H119" stroke="#000" stroke-width="1" fill="none" shape-rendering="crispEdges"/><g font-family="'Liberation Sans',sans-serif" font-size="10" fill="#000"><text x="123.5" y="91.700">0</text><text x="226.5" y="91.700">10</text><text x="330.5" y="91.700">20</text><text x="434.5" y="91.700">30</text><text x="538.5" y="91.700">40</text><text x="641.5" y="91.700">50</text><text x="745.5" y="91.700">60</text><text x="849.5" y="91.700">70</text><text x="953.5" y="91.700">80</text><text x="1057.5" y="91.700">90</text><text x="1161.5" y="91.700">100</text><text x="1264.5" y="91.700">110</text><text transform="translate(108.500 158.0) rotate(-90)" text-anchor="end" x="0" y="0">10</text><text transform="translate(108.500 262.0) rotate(-90)" text-anchor="end" x="0" y="0">20</text><text transform="translate(108.500 366.0) rotate(-90)" text-anchor="end" x="0" y="0">30</text><text transform="translate(108.500 470.0) rotate(-90)" text-anchor="end" x="0" y="0">40</text><text transform="translate(108.500 574.0) rotate(-90)" text-anchor="end" x="0" y="0">50</text><text transform="translate(108.500 677.0) rotate(-90)" text-anchor="end" x="0" y="0">60</text><text transform="translate(108.500 781.0) rotate(-90)" text-anchor="end" x="0" y="0">70</text><text transform="translate(108.500 885.0) rotate(-90)" text-anchor="end" x="0" y="0">80</text><text x="99" y="92.500" font-size="10">mm</text></g><path d="M1015.5 78V99M96 499.5H119" stroke="#e01010" stroke-width="1" shape-rendering="crispEdges"/></svg><div class="abs" style="left:1278px;top:78px;width:2px;height:876px;background:#ece9d8"></div>
<svg id="cv" viewBox="119 99 1142 814" width="1142" height="814" style="position:absolute;left:119px;top:99px;background:#000" fill="none" stroke-linecap="round" stroke-linejoin="round">
<g><circle cx="383" cy="142" r="10.5" fill="#ff0808"/>
<circle cx="488" cy="142" r="10.5" fill="#ff0808"/>
<circle cx="383" cy="181.6" r="10.5" fill="#ff0808"/>
<circle cx="488" cy="181.6" r="10.5" fill="#ff0808"/>
<circle cx="383" cy="221.2" r="10.5" fill="#ff0808"/>
<circle cx="488" cy="221.2" r="10.5" fill="#ff0808"/>
<circle cx="383" cy="260.8" r="10.5" fill="#ff0808"/>
<circle cx="488" cy="260.8" r="10.5" fill="#ff0808"/>
<polyline points="383,142 370,142 356,156 356,207.5 370,221.4 383,221.4" stroke="#ff0808" stroke-width="16" />
<polyline points="383,181.6 409,196.5 409,249 397,261 383,261" stroke="#ff0808" stroke-width="15.5" />
<polyline points="488,142 488,181.6" stroke="#ff0808" stroke-width="16" />
<polyline points="488,221.2 488,260.8" stroke="#ff0808" stroke-width="16" />
<polyline points="490,155.3 898,155.3" stroke="#ff0808" stroke-width="15.5" />
<ellipse cx="620" cy="155.3" rx="13.4" ry="14.8" fill="#ff0808"/>
<circle cx="778" cy="155.3" r="20.3" fill="#ff0808"/>
<circle cx="897.5" cy="155.3" r="9" fill="#ff0808"/>
<polyline points="490,234.8 720,234.8 778,293" stroke="#ff0808" stroke-width="15.5" />
<ellipse cx="620" cy="234.8" rx="13.4" ry="14.8" fill="#ff0808"/>
<circle cx="778" cy="293" r="20.3" fill="#ff0808"/>
<polyline points="778,293.6 868,293.6 897.5,261" stroke="#ff0808" stroke-width="15.5" />
<circle cx="897.5" cy="261" r="9" fill="#ff0808"/>
<circle cx="383" cy="326.8" r="10.5" fill="#ff0808"/>
<circle cx="488" cy="326.8" r="10.5" fill="#ff0808"/>
<circle cx="383" cy="366.4" r="10.5" fill="#ff0808"/>
<circle cx="488" cy="366.4" r="10.5" fill="#ff0808"/>
<circle cx="383" cy="406" r="10.5" fill="#ff0808"/>
<circle cx="488" cy="406" r="10.5" fill="#ff0808"/>
<circle cx="383" cy="445.6" r="10.5" fill="#ff0808"/>
<circle cx="488" cy="445.6" r="10.5" fill="#ff0808"/>
<polyline points="383,326.8 370,326.8 356,341 356,392.3 370,406.2 383,406.2" stroke="#ff0808" stroke-width="16" />
<polyline points="383,366.4 409,381.3 409,434 397,445.8 383,445.8" stroke="#ff0808" stroke-width="15.5" />
<polyline points="488,326.8 488,366.4" stroke="#ff0808" stroke-width="16" />
<polyline points="488,406 488,445.6" stroke="#ff0808" stroke-width="16" />
<polyline points="490,353 718,353 778,293" stroke="#ff0808" stroke-width="15.5" />
<ellipse cx="620" cy="353" rx="13.4" ry="14.8" fill="#ff0808"/>
<polyline points="490,432 778,432.4" stroke="#ff0808" stroke-width="15.5" />
<ellipse cx="620" cy="432" rx="13.4" ry="14.8" fill="#ff0808"/>
<circle cx="778.4" cy="432.4" r="20.3" fill="#ff0808"/>
<circle cx="316.75" cy="603.8" r="11.8" fill="#ff0808"/>
<circle cx="395.8" cy="603.8" r="10.5" fill="#ff0808"/>
<circle cx="395.8" cy="563.8" r="10.5" fill="#ff0808"/>
<circle cx="501" cy="563.8" r="10.5" fill="#ff0808"/>
<circle cx="501" cy="603.8" r="10.5" fill="#ff0808"/>
<circle cx="316.75" cy="722" r="11.8" fill="#ff0808"/>
<circle cx="316.75" cy="841" r="11.8" fill="#ff0808"/>
<circle cx="395.8" cy="841" r="10.5" fill="#ff0808"/>
<circle cx="395.8" cy="880.6" r="10.5" fill="#ff0808"/>
<circle cx="501" cy="841" r="10.5" fill="#ff0808"/>
<circle cx="501" cy="880.6" r="10.5" fill="#ff0808"/>
<polyline points="316.75,603.8 395.8,603.8" stroke="#ff0808" stroke-width="16" />
<polyline points="501,563.8 501,603.8" stroke="#ff0808" stroke-width="16" />
<polyline points="503,583.6 890,583.6" stroke="#ff0808" stroke-width="16" />
<ellipse cx="626" cy="583.6" rx="15" ry="14.4" fill="#ff0808"/>
<circle cx="784.4" cy="583.8" r="20.5" fill="#ff0808"/>
<circle cx="890" cy="583.8" r="9" fill="#ff0808"/>
<polyline points="316.75,722 859,722 890,689" stroke="#ff0808" stroke-width="16" />
<circle cx="784.4" cy="722" r="20.5" fill="#ff0808"/>
<circle cx="890" cy="689" r="9" fill="#ff0808"/>
<ellipse cx="626" cy="663" rx="15" ry="14.4" fill="#ff0808"/>
<ellipse cx="626" cy="781.4" rx="15" ry="14.4" fill="#ff0808"/>
<polyline points="627,663 627,781.4" stroke="#ff0808" stroke-width="15.5" />
<polyline points="316.75,841 395.8,841" stroke="#ff0808" stroke-width="16" />
<polyline points="501,841 501,880.6" stroke="#ff0808" stroke-width="16" />
<polyline points="503,861 784.4,861" stroke="#ff0808" stroke-width="16" />
<ellipse cx="626" cy="861" rx="15" ry="14.4" fill="#ff0808"/>
<circle cx="784.4" cy="861" r="20.5" fill="#ff0808"/></g>
<g><polyline points="383,142 488,142 495,148.6 912,148.6 917.5,154 917.5,254.5 877.5,293.6 763.5,293.6 710,240.6 503,240.6 477,267.3 304,267.3 284.3,248 284.3,162 304,142 383,142" stroke="#2c2cff" stroke-width="4.4" />
<polyline points="488,142 488,154 496,161.8 613,161.8 620,168.5 620,222 608,234.8 496,234.8 470,260.8 383,260.8" stroke="#2c2cff" stroke-width="4.4" />
<polyline points="382,267.3 390,260.8" stroke="#2c2cff" stroke-width="4.4" />
<polyline points="429.5,136.2 441.0,142 429.5,147.8" stroke="#2c2cff" stroke-width="4.2" />
<polyline points="581.0,142.8 592.5,148.6 581.0,154.4" stroke="#2c2cff" stroke-width="4.2" />
<polyline points="549.0,156.0 560.5,161.8 549.0,167.6" stroke="#2c2cff" stroke-width="4.2" />
<polyline points="614.2,173.5 620,184.5 625.8,173.5" stroke="#2c2cff" stroke-width="4.2" />
<polyline points="826.5,142.8 838.0,148.6 826.5,154.4" stroke="#2c2cff" stroke-width="4.2" />
<polyline points="911.7,209.0 917.5,220.5 923.3,209.0" stroke="#2c2cff" stroke-width="4.2" />
<polyline points="824.0,287.8 812.5,293.6 824.0,299.4" stroke="#2c2cff" stroke-width="4.2" />
<polyline points="687.0,234.8 675.5,240.6 687.0,246.4" stroke="#2c2cff" stroke-width="4.2" />
<polyline points="562.0,229.4 550.5,235.2 562.0,241.0" stroke="#2c2cff" stroke-width="4.2" />
<polyline points="448.0,261.5 436.5,267.3 448.0,273.1" stroke="#2c2cff" stroke-width="4.2" />
<polyline points="278.5,216.0 284.3,204.5 290.1,216.0" stroke="#2c2cff" stroke-width="4.2" />
<polyline points="488,326.8 487.2,333.2 303.4,333.2 284.4,352.9 284.4,440.4 303.4,459 384.4,459 391,451.8 469.7,451.8 495,426.6 612,426.6 620,419 620,360 613,352.6 494,352.6 487.2,345 487.2,333.2" stroke="#2c2cff" stroke-width="4.4" />
<polyline points="429.5,327.4 441.0,333.2 429.5,339.0" stroke="#2c2cff" stroke-width="4.2" />
<polyline points="547.5,346.8 559.0,352.6 547.5,358.4" stroke="#2c2cff" stroke-width="4.2" />
<polyline points="614.2,363.5 620,374.5 625.8,363.5" stroke="#2c2cff" stroke-width="4.2" />
<polyline points="561.7,420.8 550.2,426.6 561.7,432.4" stroke="#2c2cff" stroke-width="4.2" />
<polyline points="278.6,406.4 284.4,394.9 290.2,406.4" stroke="#2c2cff" stroke-width="4.2" />
<polyline points="646.5,867.5 646.5,571 272.5,571 243.75,598.75 243.75,826 263.75,847.5 482.5,847.5 500,867.5 646.5,867.5" stroke="#2c2cff" stroke-width="4.4" />
<polyline points="316.75,722 270,722 258,708.75 258,605 272.5,590.75 492.6,590.75 509,576.6 890,576.6 910,597 910,670 858,722 316.75,722" stroke="#2c2cff" stroke-width="4.4" />
<polyline points="316.75,603.8 285,603.8 271.25,617.5 271.25,695 282.5,708.75 612.5,708.75 620.2,698 620.2,595 609,584 509,584 488,603.8 316.75,603.8" stroke="#2c2cff" stroke-width="4.4" />
<polyline points="316.75,841 269,841 258,827.5 258,750 272.5,735.75 609.4,735.75 626,750 626,849 616.4,861 507.5,861 486,841 316.75,841" stroke="#2c2cff" stroke-width="4.4" />
<polyline points="352.0,565.2 363.5,571 352.0,576.8" stroke="#2c2cff" stroke-width="4.2" />
<polyline points="372.0,584.95 383.5,590.75 372.0,596.55" stroke="#2c2cff" stroke-width="4.2" />
<polyline points="452.0,598.0 463.5,603.8 452.0,609.6" stroke="#2c2cff" stroke-width="4.2" />
<polyline points="238.7,678.0 244.5,666.5 250.3,678.0" stroke="#2c2cff" stroke-width="4.2" />
<polyline points="252.2,641.75 258,630.25 263.8,641.75" stroke="#2c2cff" stroke-width="4.2" />
<polyline points="265.45,669.0 271.25,657.5 277.05,669.0" stroke="#2c2cff" stroke-width="4.2" />
<polyline points="463.0,702.95 451.5,708.75 463.0,714.55" stroke="#2c2cff" stroke-width="4.2" />
<polyline points="500.5,716.2 489.0,722 500.5,727.8" stroke="#2c2cff" stroke-width="4.2" />
<polyline points="372.0,729.95 383.5,735.75 372.0,741.55" stroke="#2c2cff" stroke-width="4.2" />
<polyline points="238.7,783.0 244.5,771.5 250.3,783.0" stroke="#2c2cff" stroke-width="4.2" />
<polyline points="252.2,806.75 258,795.25 263.8,806.75" stroke="#2c2cff" stroke-width="4.2" />
<polyline points="363.0,835.2 351.5,841 363.0,846.8" stroke="#2c2cff" stroke-width="4.2" />
<polyline points="336.75,842.2 325.25,848 336.75,853.8" stroke="#2c2cff" stroke-width="4.2" />
<polyline points="640.7,636.0 646.5,647.5 652.3,636.0" stroke="#2c2cff" stroke-width="4.2" />
<polyline points="614.4,677.0 620.2,688.5 626.0,677.0" stroke="#2c2cff" stroke-width="4.2" />
<polyline points="726.5,570.8 738.0,576.6 726.5,582.4" stroke="#2c2cff" stroke-width="4.2" />
<polyline points="904.2,630.0 910,641.5 915.8,630.0" stroke="#2c2cff" stroke-width="4.2" />
<polyline points="745.0,716.2 733.5,722 745.0,727.8" stroke="#2c2cff" stroke-width="4.2" />
<polyline points="640.7,802.0 646.5,813.5 652.3,802.0" stroke="#2c2cff" stroke-width="4.2" />
<polyline points="620.2,799.0 626,811.0 631.8,799.0" stroke="#2c2cff" stroke-width="4.2" />
<polyline points="535.0,855.2 523.5,861 535.0,866.8" stroke="#2c2cff" stroke-width="4.2" />
<polyline points="567.5,861.7 556.0,867.5 567.5,873.3" stroke="#2c2cff" stroke-width="4.2" /></g>
<g stroke-linejoin="miter"><path d="M271,142 A19.8,19.8 0 0 0 271,181.6 A19.8,19.8 0 0 0 271,221.2 A19.8,19.8 0 0 0 271,260.8" stroke="#14e614" stroke-width="2"/>
<polyline points="271,142 383,142" stroke="#14e614" stroke-width="2" stroke-linecap="butt"/>
<polyline points="271,260.8 383,260.8" stroke="#14e614" stroke-width="2" stroke-linecap="butt"/>
<rect x="402" y="127" width="66.5" height="30.5" stroke="#14e614" stroke-width="2"/>
<rect x="454.0" y="127" width="9.0" height="30.5" fill="#14e614"/>
<rect x="402" y="166.6" width="66.5" height="30.599999999999994" stroke="#14e614" stroke-width="2"/>
<rect x="454.0" y="166.6" width="9.0" height="30.599999999999994" fill="#14e614"/>
<rect x="402" y="206.2" width="66.5" height="30.200000000000017" stroke="#14e614" stroke-width="2"/>
<rect x="408" y="206.2" width="9" height="30.200000000000017" fill="#14e614"/>
<rect x="402" y="245.8" width="66.5" height="30.399999999999977" stroke="#14e614" stroke-width="2"/>
<rect x="408" y="245.8" width="9" height="30.399999999999977" fill="#14e614"/>
<circle cx="620" cy="195.3" r="92.5" stroke="#14e614" stroke-width="2"/>
<polyline points="611,123.3 629,123.3" stroke="#14e614" stroke-width="3.6" stroke-linecap="butt"/>
<polyline points="620,113.3 620,133.3" stroke="#14e614" stroke-width="3.6" stroke-linecap="butt"/>
<rect x="604.5" y="188.8" width="31.0" height="7.0" stroke="#14e614" stroke-width="2"/>
<polyline points="604,202.3 636,202.3" stroke="#14e614" stroke-width="2" stroke-linecap="butt"/>
<polyline points="620,168.3 620,188.8" stroke="#14e614" stroke-width="2" stroke-linecap="butt"/>
<polyline points="620,202.3 620,222.3" stroke="#14e614" stroke-width="2" stroke-linecap="butt"/>
<rect x="885" y="174.8" width="24" height="66.19999999999999" stroke="#14e614" stroke-width="2"/>
<polyline points="897,163 897,174.8" stroke="#14e614" stroke-width="2" stroke-linecap="butt"/>
<polyline points="897,241 897,253" stroke="#14e614" stroke-width="2" stroke-linecap="butt"/>
<text x="897" y="213.4" transform="rotate(90 897 207.9)" font-family="'Liberation Sans',sans-serif" font-size="15.5" fill="#9cf29c" stroke="none" text-anchor="middle" font-weight="normal">10</text>
<path d="M271,326.8 A19.8,19.8 0 0 0 271,366.4 A19.8,19.8 0 0 0 271,406.0 A19.8,19.8 0 0 0 271,445.6" stroke="#14e614" stroke-width="2"/>
<polyline points="271,326.8 383,326.8" stroke="#14e614" stroke-width="2" stroke-linecap="butt"/>
<polyline points="271,445.6 383,445.6" stroke="#14e614" stroke-width="2" stroke-linecap="butt"/>
<rect x="402" y="311.8" width="66.5" height="30.599999999999966" stroke="#14e614" stroke-width="2"/>
<rect x="454.0" y="311.8" width="9.0" height="30.599999999999966" fill="#14e614"/>
<rect x="402" y="351.6" width="66.5" height="30.0" stroke="#14e614" stroke-width="2"/>
<rect x="454.0" y="351.6" width="9.0" height="30.0" fill="#14e614"/>
<rect x="402" y="390.6" width="66.5" height="30.399999999999977" stroke="#14e614" stroke-width="2"/>
<rect x="408" y="390.6" width="9" height="30.399999999999977" fill="#14e614"/>
<rect x="402" y="430.4" width="66.5" height="29.80000000000001" stroke="#14e614" stroke-width="2"/>
<rect x="408" y="430.4" width="9" height="29.80000000000001" fill="#14e614"/>
<circle cx="620" cy="393" r="92.5" stroke="#14e614" stroke-width="2"/>
<polyline points="611,321 629,321" stroke="#14e614" stroke-width="3.6" stroke-linecap="butt"/>
<polyline points="620,311 620,331" stroke="#14e614" stroke-width="3.6" stroke-linecap="butt"/>
<rect x="604.5" y="386.5" width="31.0" height="7.0" stroke="#14e614" stroke-width="2"/>
<polyline points="604,400 636,400" stroke="#14e614" stroke-width="2" stroke-linecap="butt"/>
<polyline points="620,366 620,386.5" stroke="#14e614" stroke-width="2" stroke-linecap="butt"/>
<polyline points="620,400 620,420" stroke="#14e614" stroke-width="2" stroke-linecap="butt"/>
<path d="M237.5,603.8 A19.77,19.77 0 0 0 237.5,643.34 A19.77,19.77 0 0 0 237.5,682.88 A19.77,19.77 0 0 0 237.5,722.42 A19.77,19.77 0 0 0 237.5,761.96 A19.77,19.77 0 0 0 237.5,801.5 A19.77,19.77 0 0 0 237.5,841.04" stroke="#14e614" stroke-width="2"/>
<polyline points="237.5,603.8 316.75,603.8" stroke="#14e614" stroke-width="2" stroke-linecap="butt"/>
<polyline points="237.5,722.4 316.75,722.4" stroke="#14e614" stroke-width="2" stroke-linecap="butt"/>
<polyline points="237.5,841 316.75,841" stroke="#14e614" stroke-width="2" stroke-linecap="butt"/>
<rect x="415.5" y="548.8" width="67.0" height="30.40000000000009" stroke="#14e614" stroke-width="2"/>
<rect x="468.0" y="548.8" width="9.0" height="30.40000000000009" fill="#14e614"/>
<rect x="415.5" y="589.2" width="67.0" height="30.0" stroke="#14e614" stroke-width="2"/>
<rect x="468.0" y="589.2" width="9.0" height="30.0" fill="#14e614"/>
<rect x="415.5" y="825.8" width="67.0" height="30.40000000000009" stroke="#14e614" stroke-width="2"/>
<rect x="421.5" y="825.8" width="9.0" height="30.40000000000009" fill="#14e614"/>
<rect x="415.5" y="865.8" width="67.0" height="29.800000000000068" stroke="#14e614" stroke-width="2"/>
<rect x="421.5" y="865.8" width="9.0" height="29.800000000000068" fill="#14e614"/>
<circle cx="626" cy="623.3" r="92.5" stroke="#14e614" stroke-width="2"/>
<polyline points="617,551.3 635,551.3" stroke="#14e614" stroke-width="3.6" stroke-linecap="butt"/>
<polyline points="626,541.3 626,561.3" stroke="#14e614" stroke-width="3.6" stroke-linecap="butt"/>
<rect x="610.5" y="616.8" width="31.0" height="7.0" stroke="#14e614" stroke-width="2"/>
<polyline points="610,630.3 642,630.3" stroke="#14e614" stroke-width="2" stroke-linecap="butt"/>
<polyline points="626,596.3 626,616.8" stroke="#14e614" stroke-width="2" stroke-linecap="butt"/>
<polyline points="626,630.3 626,650.3" stroke="#14e614" stroke-width="2" stroke-linecap="butt"/>
<circle cx="626" cy="821" r="92.5" stroke="#14e614" stroke-width="2"/>
<polyline points="617,749 635,749" stroke="#14e614" stroke-width="3.6" stroke-linecap="butt"/>
<polyline points="626,739 626,759" stroke="#14e614" stroke-width="3.6" stroke-linecap="butt"/>
<rect x="610.5" y="814.5" width="31.0" height="7.0" stroke="#14e614" stroke-width="2"/>
<polyline points="610,828 642,828" stroke="#14e614" stroke-width="2" stroke-linecap="butt"/>
<polyline points="626,794 626,814.5" stroke="#14e614" stroke-width="2" stroke-linecap="butt"/>
<polyline points="626,828 626,848" stroke="#14e614" stroke-width="2" stroke-linecap="butt"/>
<rect x="878.3" y="604" width="24.0" height="66.39999999999998" stroke="#14e614" stroke-width="2"/>
<polyline points="890.3,592 890.3,604" stroke="#14e614" stroke-width="2" stroke-linecap="butt"/>
<polyline points="890.3,670.4 890.3,682" stroke="#14e614" stroke-width="2" stroke-linecap="butt"/>
<text x="890.3" y="642.7" transform="rotate(90 890.3 637.2)" font-family="'Liberation Sans',sans-serif" font-size="15.5" fill="#9cf29c" stroke="none" text-anchor="middle" font-weight="normal">10</text></g>
<g><polyline points="305,142 379,142" stroke="#2cb0c4" stroke-width="2.9" stroke-linecap="butt"/>
<polyline points="620,170 620,221" stroke="#2cb0c4" stroke-width="2.9" stroke-linecap="butt"/>
<polyline points="620,361 620,419" stroke="#2cb0c4" stroke-width="2.9" stroke-linecap="butt"/>
<polyline points="285,603.8 311,603.8" stroke="#2cb0c4" stroke-width="2.9" stroke-linecap="butt"/>
<polyline points="270,722.2 311,722.2" stroke="#2cb0c4" stroke-width="2.9" stroke-linecap="butt"/>
<polyline points="270,841 311,841" stroke="#2cb0c4" stroke-width="2.9" stroke-linecap="butt"/>
<polyline points="626,813 626,848" stroke="#2cb0c4" stroke-width="2.9" stroke-linecap="butt"/></g>
<g><circle cx="383" cy="142" r="3.5" fill="#000"/>
<circle cx="488" cy="142" r="3.5" fill="#000"/>
<circle cx="383" cy="181.6" r="3.5" fill="#000"/>
<circle cx="488" cy="181.6" r="3.5" fill="#000"/>
<circle cx="383" cy="221.2" r="3.5" fill="#000"/>
<circle cx="488" cy="221.2" r="3.5" fill="#000"/>
<circle cx="383" cy="260.8" r="3.5" fill="#000"/>
<circle cx="488" cy="260.8" r="3.5" fill="#000"/>
<circle cx="620" cy="155.3" r="3.5" fill="#000"/>
<circle cx="778" cy="155.3" r="9" fill="#000"/>
<circle cx="897.5" cy="155.3" r="3" fill="#000"/>
<circle cx="620" cy="234.8" r="3.5" fill="#000"/>
<circle cx="778" cy="293" r="9" fill="#000"/>
<circle cx="897.5" cy="261" r="3" fill="#000"/>
<circle cx="383" cy="326.8" r="3.5" fill="#000"/>
<circle cx="488" cy="326.8" r="3.5" fill="#000"/>
<circle cx="383" cy="366.4" r="3.5" fill="#000"/>
<circle cx="488" cy="366.4" r="3.5" fill="#000"/>
<circle cx="383" cy="406" r="3.5" fill="#000"/>
<circle cx="488" cy="406" r="3.5" fill="#000"/>
<circle cx="383" cy="445.6" r="3.5" fill="#000"/>
<circle cx="488" cy="445.6" r="3.5" fill="#000"/>
<circle cx="620" cy="353" r="3.5" fill="#000"/>
<circle cx="620" cy="432" r="3.5" fill="#000"/>
<circle cx="778.4" cy="432.4" r="9" fill="#000"/>
<circle cx="316.75" cy="603.8" r="3.5" fill="#000"/>
<circle cx="395.8" cy="603.8" r="3.5" fill="#000"/>
<circle cx="395.8" cy="563.8" r="3.5" fill="#000"/>
<circle cx="501" cy="563.8" r="3.5" fill="#000"/>
<circle cx="501" cy="603.8" r="3.5" fill="#000"/>
<circle cx="316.75" cy="722" r="3.5" fill="#000"/>
<circle cx="316.75" cy="841" r="3.5" fill="#000"/>
<circle cx="395.8" cy="841" r="3.5" fill="#000"/>
<circle cx="395.8" cy="880.6" r="3.5" fill="#000"/>
<circle cx="501" cy="841" r="3.5" fill="#000"/>
<circle cx="501" cy="880.6" r="3.5" fill="#000"/>
<circle cx="626" cy="583.6" r="3.5" fill="#000"/>
<circle cx="784.4" cy="583.8" r="9.3" fill="#000"/>
<circle cx="890" cy="583.8" r="3" fill="#000"/>
<circle cx="784.4" cy="722" r="9.3" fill="#000"/>
<circle cx="890" cy="689" r="3" fill="#000"/>
<circle cx="626" cy="663" r="3.5" fill="#000"/>
<circle cx="626" cy="781.4" r="3.5" fill="#000"/>
<circle cx="626" cy="861" r="3.5" fill="#000"/>
<circle cx="784.4" cy="861" r="9.3" fill="#000"/></g>
</svg>
<div class="abs" style="left:1261px;top:99px;width:17px;height:814px;background-color:#fff;background-image:linear-gradient(45deg,#ece9d8 25%,transparent 25%,transparent 75%,#ece9d8 75%),linear-gradient(45deg,#ece9d8 25%,transparent 25%,transparent 75%,#ece9d8 75%);background-size:2px 2px;background-position:0 0,1px 1px"></div><div class="abs" style="left:1261px;top:99px;width:17px;height:17px;background:#ece9d8;border-top:1px solid #fff;border-left:1px solid #fff;border-right:1px solid #716f64;border-bottom:1px solid #716f64;box-shadow:inset -1px -1px 0 #aca899"><svg class="abs" style="left:4px;top:5px" width="8" height="5" viewBox="0 0 8 5" ><path d="M0 4.5L3.5 0.5L7 4.5Z" fill="#000"/></svg></div><div class="abs" style="left:1261px;top:897px;width:17px;height:17px;background:#ece9d8;border-top:1px solid #fff;border-left:1px solid #fff;border-right:1px solid #716f64;border-bottom:1px solid #716f64;box-shadow:inset -1px -1px 0 #aca899"><svg class="abs" style="left:4px;top:6px" width="8" height="5" viewBox="0 0 8 5" ><path d="M0 0.5L3.5 4.5L7 0.5Z" fill="#000"/></svg></div><div class="abs" style="left:1261px;top:155px;width:17px;height:611px;background:#ece9d8;border-top:1px solid #fff;border-left:1px solid #fff;border-right:1px solid #716f64;border-bottom:1px solid #716f64;box-shadow:inset -1px -1px 0 #aca899"></div><div class="abs" style="left:119px;top:914px;width:1142px;height:17px;background-color:#fff;background-image:linear-gradient(45deg,#ece9d8 25%,transparent 25%,transparent 75%,#ece9d8 75%),linear-gradient(45deg,#ece9d8 25%,transparent 25%,transparent 75%,#ece9d8 75%);background-size:2px 2px;background-position:0 0,1px 1px"></div><div class="abs" style="left:119px;top:914px;width:17px;height:17px;background:#ece9d8;border-top:1px solid #fff;border-left:1px solid #fff;border-right:1px solid #716f64;border-bottom:1px solid #716f64;box-shadow:inset -1px -1px 0 #aca899"><svg class="abs" style="left:5px;top:4px" width="5" height="8" viewBox="0 0 5 8" ><path d="M4.5 0L0.5 3.5L4.5 7Z" fill="#000"/></svg></div><div class="abs" style="left:1244px;top:914px;width:17px;height:17px;background:#ece9d8;border-top:1px solid #fff;border-left:1px solid #fff;border-right:1px solid #716f64;border-bottom:1px solid #716f64;box-shadow:inset -1px -1px 0 #aca899"><svg class="abs" style="left:6px;top:4px" width="5" height="8" viewBox="0 0 5 8" ><path d="M0.5 0L4.5 3.5L0.5 7Z" fill="#000"/></svg></div><div class="abs" style="left:136px;top:914px;width:762px;height:17px;background:#ece9d8;border-top:1px solid #fff;border-left:1px solid #fff;border-right:1px solid #716f64;border-bottom:1px solid #716f64;box-shadow:inset -1px -1px 0 #aca899"></div><div class="abs" style="left:1261px;top:914px;width:17px;height:17px;background:#ece9d8"></div>
<div class="abs" style="left:95px;top:934px;width:1185px;height:19px;background-color:#fff;background-image:linear-gradient(45deg,#ece9d8 25%,transparent 25%,transparent 75%,#ece9d8 75%),linear-gradient(45deg,#ece9d8 25%,transparent 25%,transparent 75%,#ece9d8 75%);background-size:2px 2px;background-position:0 0,1px 1px"></div><div class="abs" style="left:94px;top:932px;width:1186px;height:2px;background:#000"></div><svg class="abs" style="left:96px;top:932px" width="62" height="19" viewBox="0 0 62 19" ><path d="M4 1 L11 16.500 L50 16.500 L55.500 1" fill="#ece9d8" stroke="#000" stroke-width="1.500"/><path d="M5 0.800H54.500" stroke="#ece9d8" stroke-width="2.200"/></svg><div class="t11" style="left:108px;top:936px;letter-spacing:-0.3px">Board 1</div>
<div class="abs" style="left:0px;top:953px;width:1280px;height:41px;background:#ece9d8"></div><div class="abs" style="left:1px;top:956px;width:74px;height:37px;border-top:1px solid #aca899;border-left:1px solid #aca899;border-right:1px solid #fff;border-bottom:1px solid #fff"></div><div class="abs" style="left:79px;top:956px;width:154px;height:37px;border-top:1px solid #aca899;border-left:1px solid #aca899;border-right:1px solid #fff;border-bottom:1px solid #fff"></div><div class="abs" style="left:236px;top:956px;width:41px;height:37px;border-top:1px solid #aca899;border-left:1px solid #aca899;border-right:1px solid #fff;border-bottom:1px solid #fff"></div><div class="abs" style="left:280px;top:956px;width:999px;height:37px;border-top:1px solid #aca899;border-left:1px solid #aca899;border-right:1px solid #fff;border-bottom:1px solid #fff"></div><div class="t11" style="left:6px;top:962px;">X:</div><div class="t11" style="left:6px;top:977px;">Y:</div><div class="t11" style="left:25px;top:962px;letter-spacing:-0.3px">86,32 mm</div><div class="t11" style="left:25px;top:977px;letter-spacing:-0.3px">43,26 mm</div><div class="t11" style="left:91px;top:961px;letter-spacing:-0.3px">visible</div><div class="t11" style="left:89px;top:977px;">active</div><div class="abs" style="left:124px;top:958px;width:95px;height:17px;background:#000;font-weight:bold;font-size:11.500px;line-height:18px"><span style="position:absolute;left:3px;top:0;color:#2430c0">C1</span><span style="position:absolute;left:22px;top:0;color:#20d040">S1</span><span style="position:absolute;left:41px;top:0;color:#e02020">C2</span><span style="position:absolute;left:60px;top:0;color:#e8d838">S2</span><span style="position:absolute;left:82px;top:0;color:#fff">0</span></div><svg class="abs" style="left:127px;top:977px" width="13" height="13" viewBox="0 0 13 13" ><circle cx="6.5" cy="6.5" r="5.2" fill="#fff" stroke="#fff"/><path d="M2.6 10.4A5.5 5.5 0 0 1 10.4 2.6" fill="none" stroke="#716f64" stroke-width="1.3"/><circle cx="6.5" cy="6.5" r="2" fill="#000"/></svg><svg class="abs" style="left:146px;top:977px" width="13" height="13" viewBox="0 0 13 13" ><circle cx="6.5" cy="6.5" r="5.2" fill="#fff" stroke="#fff"/><path d="M2.6 10.4A5.5 5.5 0 0 1 10.4 2.6" fill="none" stroke="#716f64" stroke-width="1.3"/></svg><svg class="abs" style="left:165px;top:977px" width="13" height="13" viewBox="0 0 13 13" ><circle cx="6.5" cy="6.5" r="5.2" fill="#fff" stroke="#fff"/><path d="M2.6 10.4A5.5 5.5 0 0 1 10.4 2.6" fill="none" stroke="#716f64" stroke-width="1.3"/></svg><svg class="abs" style="left:184px;top:977px" width="13" height="13" viewBox="0 0 13 13" ><circle cx="6.5" cy="6.5" r="5.2" fill="#fff" stroke="#fff"/><path d="M2.6 10.4A5.5 5.5 0 0 1 10.4 2.6" fill="none" stroke="#716f64" stroke-width="1.3"/></svg><svg class="abs" style="left:203px;top:977px" width="13" height="13" viewBox="0 0 13 13" ><circle cx="6.5" cy="6.5" r="5.2" fill="#fff" stroke="#fff"/><path d="M2.6 10.4A5.5 5.5 0 0 1 10.4 2.6" fill="none" stroke="#716f64" stroke-width="1.3"/></svg><div class="t11" style="left:224px;top:969px;">?</div><svg class="abs" style="left:243px;top:962px" width="27" height="26" viewBox="0 0 27 26" ><rect width="27" height="26" fill="#808080"/><path d="M0 6H8L18 16" stroke="#fff" stroke-width="5" fill="none" stroke-linejoin="round"/><circle cx="18.5" cy="17" r="5.5" fill="#fff"/><path d="M0 6H8L18 16" stroke="#000" stroke-width="2.6" fill="none" stroke-linejoin="round"/><circle cx="18.5" cy="17" r="3" fill="none" stroke="#000" stroke-width="2.2"/></svg><div class="t11" style="left:285px;top:961px;color:#0a0a40;letter-spacing:-0.15px">Edit: Select, move, delete, copy or paste objects.</div><div class="t11" style="left:285px;top:974px;color:#0a0a40;letter-spacing:-0.15px">&lt;SPACE&gt;=Zoom</div>
<div class="abs" style="left:0px;top:994px;width:1280px;height:30px;background:linear-gradient(to bottom,#3a80f0 0%,#2a6ce8 8%,#245edc 20%,#2460de 50%,#2258d4 85%,#1c46b8 100%)"></div><div class="abs" style="left:0px;top:994px;width:98px;height:30px;background:linear-gradient(to bottom,#5cb85c 0%,#3c9c3c 12%,#348c34 50%,#2c7c2c 88%,#246c24 100%);border-radius:0 12px 12px 0;box-shadow:inset -2px 0 4px rgba(0,0,0,.3), 1px 0 3px rgba(0,0,0,.4)"></div><svg class="abs" style="left:10px;top:1000px" width="20" height="18" viewBox="0 0 20 18" ><path d="M1 3Q4 1 8 3L7 8Q4 6 0 8Z" fill="#e8502c"/><path d="M9.5 3.5Q13 5.5 17 3.5L16 8.5Q12 10.5 8.5 8.5Z" fill="#7cc43c"/><path d="M0 9.5Q3.5 7.5 7 9.5L6 14.5Q2.5 12.5 -1 14.5Z" fill="#3c8cf0"/><path d="M8 10Q11.5 12 15.5 10L14.5 15Q10.5 17 7 15Z" fill="#f8c820"/></svg><div class="abs" style="left:35px;top:998px;color:#fff;font-size:18px;font-weight:bold;font-style:italic;text-shadow:1px 1px 2px #1a4a1a;letter-spacing:-0.3px">Start</div><div class="abs" style="left:108px;top:997px;width:158px;height:24px;background:linear-gradient(to bottom,#5c9cf8 0%,#3c80f0 15%,#3478ea 50%,#2c6ce0 100%);border-radius:3px;box-shadow:inset 1px 1px 0 rgba(255,255,255,.25);color:#fff;font-size:11px;line-height:24px;white-space:nowrap"><svg class="abs" style="left:8px;top:3px" width="18" height="18" viewBox="0 0 18 18" ><circle cx="9" cy="9" r="7.5" fill="#e86a1c"/><circle cx="9.5" cy="9" r="4.6" fill="#5a4ac8"/><path d="M2 6Q5 2 11 2.5Q6 5 7 9Q8 12 12 12Q8 16 3.5 13Q1 10 2 6Z" fill="#f8b020"/></svg><span style="position:absolute;left:30px;top:0">[9] Quad 405-ös erős...</span></div><div class="abs" style="left:269px;top:997px;width:158px;height:24px;background:linear-gradient(to bottom,#1e52b8,#1c4aac 50%,#1e50b4);border-radius:3px;box-shadow:inset 1px 1px 2px rgba(0,0,0,.4);color:#fff;font-size:11px;line-height:24px;white-space:nowrap"><svg class="abs" style="left:9px;top:4px" width="18" height="18" viewBox="0 0 18 18" ><rect x="3" y="0" width="4" height="8" fill="#888"/><circle cx="5" cy="11" r="4" fill="#909090"/><circle cx="5" cy="11" r="1.2" fill="#333"/><rect x="9" y="9.5" width="6" height="3.2" fill="#909090"/></svg><span style="position:absolute;left:30px;top:0">Sprint-Layout 5.0</span></div><div class="abs" style="left:429px;top:997px;width:158px;height:24px;background:linear-gradient(to bottom,#5c9cf8 0%,#3c80f0 15%,#3478ea 50%,#2c6ce0 100%);border-radius:3px;box-shadow:inset 1px 1px 0 rgba(255,255,255,.25);color:#fff;font-size:11px;line-height:24px;white-space:nowrap"><svg class="abs" style="left:8px;top:4px" width="17" height="17" viewBox="0 0 17 17" ><rect x="0.500" y="0.500" width="15" height="15" fill="#141478" stroke="#0a0a40"/><rect x="3.500" y="1" width="8" height="5" fill="#fff"/><rect x="8.500" y="1.500" width="2" height="3.500" fill="#141478"/><rect x="1.500" y="7.500" width="13" height="8" fill="#fff"/><rect x="1.500" y="8.500" width="13" height="2" fill="#e02020"/><rect x="1.500" y="12.500" width="13" height="2" fill="#e02020"/></svg><span style="position:absolute;left:30px;top:0">Total Commander 6.5...</span></div><div class="abs" style="left:1116px;top:1003px;color:#fff;font-size:11px">HU</div><div class="abs" style="left:1152px;top:994px;width:128px;height:30px;background:linear-gradient(to bottom,#1c9cf0 0%,#18a0f4 10%,#1290e8 50%,#0e84dc 90%,#0c6cc0 100%);border-left:1px solid #0c3c8c;box-shadow:inset 1px 0 0 #48b8f8"></div><svg class="abs" style="left:1160px;top:1001px" width="17" height="17" viewBox="0 0 17 17" ><path d="M8.5 0.5L15.5 3V8Q15 13 8.5 16Q2 13 1.5 8V3Z" fill="#d82020" stroke="#eee" stroke-width="1"/><path d="M6 5.5L11 10.5M11 5.5L6 10.5" stroke="#fff" stroke-width="1.8"/></svg><svg class="abs" style="left:1179px;top:1001px" width="17" height="17" viewBox="0 0 17 17" ><circle cx="7" cy="7.5" r="6" fill="#909498"/><circle cx="7" cy="7.5" r="3" fill="#5a5e66"/><path d="M9 13L14 15" stroke="#a8d0f0" stroke-width="1.5"/></svg><svg class="abs" style="left:1197px;top:1001px" width="17" height="17" viewBox="0 0 17 17" ><path d="M1 6H5L10 1.5V15L5 10.5H1Z" fill="#e08030" stroke="#703810" stroke-width="0.8"/><path d="M12 3.5V13M14.5 2V14.5" stroke="#222" stroke-width="1.3"/></svg><svg class="abs" style="left:1216px;top:1000px" width="14" height="19" viewBox="0 0 14 19" ><ellipse cx="7" cy="9.5" rx="6" ry="9" fill="#1c2ce0"/><path d="M4 5.5L10 12L7 15V4L10 7L4 13.5" stroke="#e02020" stroke-width="1.6" fill="none"/></svg><div class="abs" style="left:1239px;top:1003px;color:#fff;font-size:11px">16:58</div>
</body></html>
